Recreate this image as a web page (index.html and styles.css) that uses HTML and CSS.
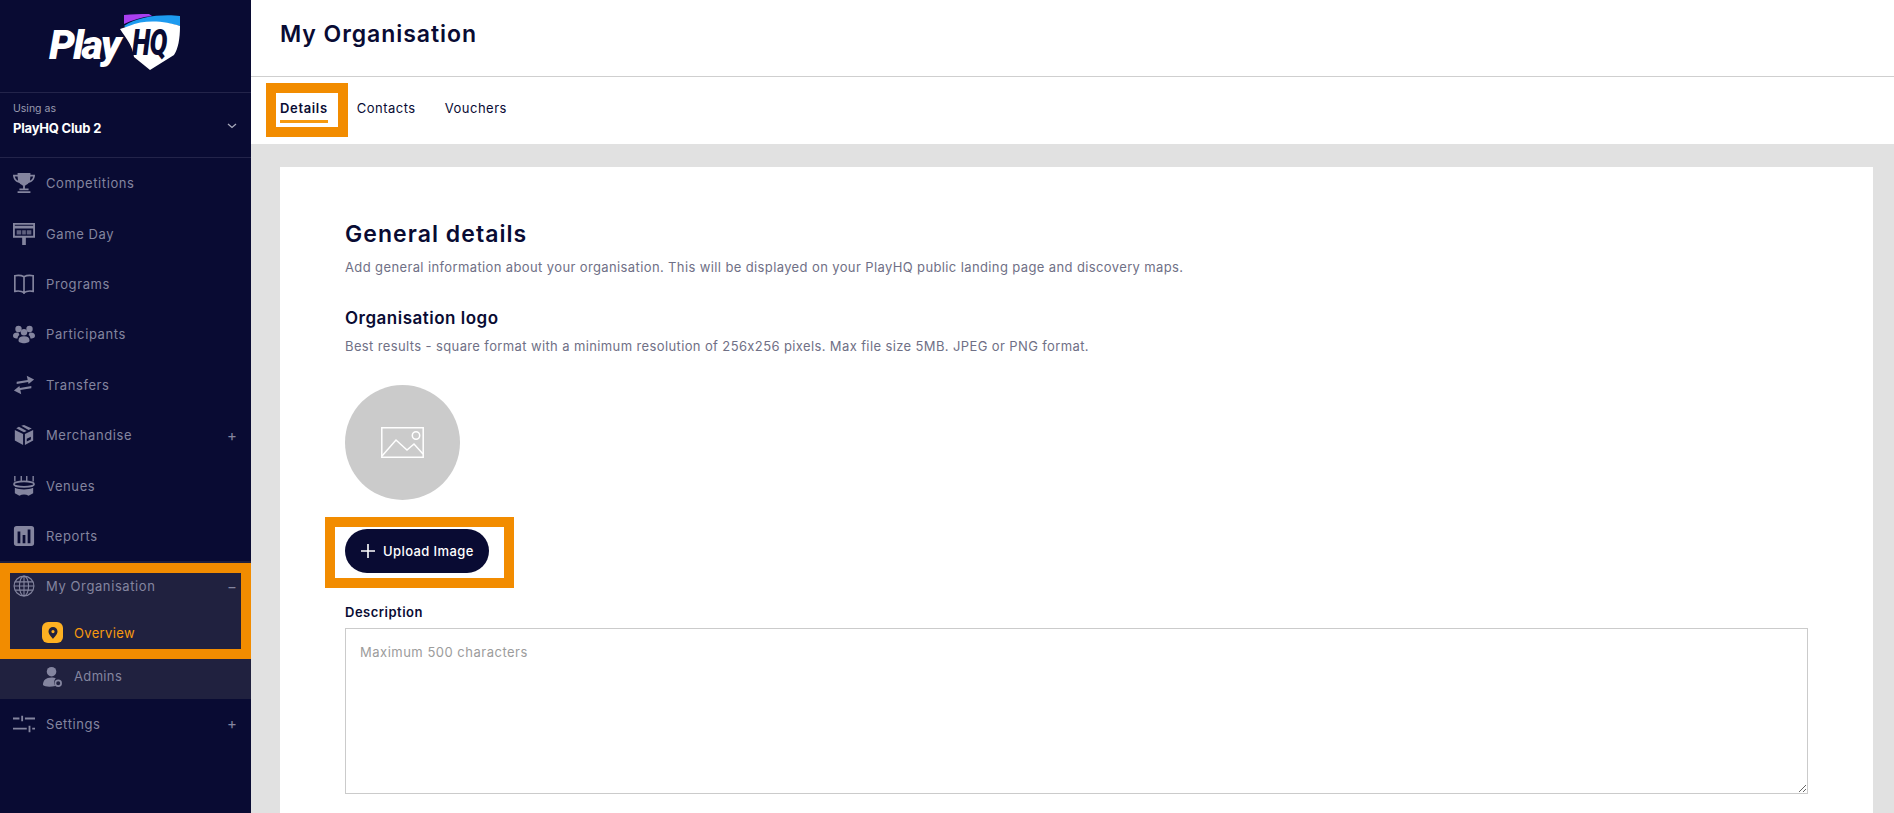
FILE: index.html
```html
<!DOCTYPE html>
<html lang="en">
<head>
<meta charset="utf-8">
<title>My Organisation</title>
<link rel="stylesheet" href="styles.css">
</head>
<body>
<div class="app">
  <aside class="sidebar">
    <div class="brand">
      <div class="logo">
        <span class="logo-play">Play</span>
        <div class="logo-shield">
          <svg class="shield-svg" viewBox="0 0 60 58">
            <path d="M4 2C12 1 20 1 29 1L32 3C22 4 12 7 4 11Z" fill="#a93ff0"/>
            <path d="M4 13C18 3 44 1 60 3V13C44 8 24 9 9 17Z" fill="#1d9bf0"/>
            <path d="M0 16L9 13C24 6 46 8 60 13C60 26 58 36 54 42L30 57L14 44C12 32 8 28 0 16Z" fill="#fff"/>
          </svg>
          <span class="logo-hq">HQ</span>
        </div>
      </div>
    </div>
    <div class="org-switch">
      <div>
        <div class="using">Using as</div>
        <div class="club">PlayHQ Club 2</div>
      </div>
      <svg class="chev" viewBox="0 0 10 6"><path d="M1 1L5 4.500L9 1" fill="none" stroke="#a9aabb" stroke-width="1.300"/></svg>
    </div>
    <nav class="nav">
      <a class="item"><svg class="ico" viewBox="0 0 24 24"><path d="M5 1H19V3H24C24 8 21 11 17 12C16 13.500 14 14 13 15V18H17V20H7V18H11V15C10 14 8 13.500 7 12C3 11 0 8 0 3H5ZM2 5C2.500 7.500 4 9 5.500 9.500L5 5ZM22 5H19L18.500 9.500C20 9 21.500 7.500 22 5ZM5 21H19V23H5Z" fill-rule="evenodd"/></svg><span>Competitions</span></a>
      <a class="item"><svg class="ico" viewBox="0 0 24 24"><path d="M0 0H24V16H14V24H10V16H0ZM2 2V3H22V2ZM2 6V14H22V6Z" fill-rule="evenodd"/><path d="M4 8H9V12.500H4ZM10 8H14V12.500H10ZM15 8H20V12.500H15Z" opacity=".7"/></svg><span>Game Day</span></a>
      <a class="item"><svg class="ico" viewBox="0 0 24 24"><path d="M12 4C10 3 5 2.500 2 3V20C5 19.500 10 20 12 21.500C14 20 19 19.500 22 20V3C19 2.500 14 3 12 4ZM12 4V23" fill="none" stroke="currentColor" stroke-width="1.800"/></svg><span>Programs</span></a>
      <a class="item"><svg class="ico" viewBox="0 0 24 24"><circle cx="6" cy="6.500" r="3.500"/><circle cx="18" cy="6.500" r="3.500"/><circle cx="12" cy="10" r="3.500"/><path d="M0 14C0 11 3 10 6 10.500L7 13C5.500 14 5 15.500 5 17C3 17 0 16.500 0 14ZM24 14C24 11 21 10 18 10.500L17 13C18.500 14 19 15.500 19 17C21 17 24 16.500 24 14ZM6 19C6 16 8 14.500 12 14.500C16 14.500 18 16 18 19C18 21 15 22 12 22C9 22 6 21 6 19Z"/></svg><span>Participants</span></a>
      <a class="item"><svg class="ico" viewBox="0 0 24 24"><path d="M4 11V8.500L16 6.500L15 2L23 6L17 11L16.500 8.800ZM20 13V15.500L8 17.500L9 22L1 18L7 13L7.500 15.200Z"/></svg><span>Transfers</span></a>
      <a class="item has-sign"><svg class="ico" viewBox="0 0 24 24"><path d="M12 1L9 2L17 6.500L20.500 5ZM6.500 3L3.500 4.500L12 9L15 7.500ZM2 6.500V18L11 23V11ZM22 6.500L13 11V23L22 18ZM15 16L19.500 14V17L15 19Z" fill-rule="evenodd"/></svg><span>Merchandise</span><i class="sign">+</i></a>
      <a class="item"><svg class="ico" viewBox="0 0 24 24"><path d="M2 1V7M9 1V7M15 1V7M22 1V7" stroke="currentColor" stroke-width="1.500"/><ellipse cx="12" cy="10" rx="11" ry="3" fill="none" stroke="currentColor" stroke-width="1.800"/><path d="M2 14C7 16.500 17 16.500 22 14V20L17 22.500C14 21 10 21 7 22.500L2 20Z"/></svg><span>Venues</span></a>
      <a class="item"><svg class="ico" viewBox="0 0 24 24"><path d="M4 1H20A3 3 0 0 1 23 4V20A3 3 0 0 1 20 23H4A3 3 0 0 1 1 20V4A3 3 0 0 1 4 1ZM5 7V20H8V7ZM10.500 11V20H13.500V11ZM16 5V20H19V5Z" fill-rule="evenodd"/></svg><span>Reports</span></a>
      <div class="group">
        <a class="item has-sign"><svg class="ico" viewBox="0 0 24 24"><g fill="none" stroke="currentColor" stroke-width="1.200"><circle cx="12" cy="12" r="10.800"/><ellipse cx="12" cy="12" rx="5" ry="10.800"/><path d="M12 1V23M2 7.500H22M1 12H23M2 16.500H22"/></g></svg><span>My Organisation</span><i class="sign">−</i></a>
        <a class="sub active"><span class="marker"><svg viewBox="0 0 12 14"><path d="M6 1A4.500 4.500 0 0 1 10.500 5.500C10.500 8.500 7 11.500 6 13C5 11.500 1.500 8.500 1.500 5.500A4.500 4.500 0 0 1 6 1ZM6 4A1.600 1.600 0 1 0 6 7.200A1.600 1.600 0 1 0 6 4Z" fill="#20213f" fill-rule="evenodd"/></svg></span><span>Overview</span></a>
        <a class="sub"><svg class="sub-ico" viewBox="0 0 22 22"><circle cx="10" cy="6" r="5"/><path d="M1 20C1 15 4 12 10 12C12 12 13.500 12.500 14.500 13C12.500 14.500 12 18 14 21C9 22 3 22 1 20Z"/><circle cx="17" cy="18" r="3" fill="none" stroke="currentColor" stroke-width="1.800"/></svg><span>Admins</span></a>
        <div class="hl-nav"></div>
      </div>
      <a class="item has-sign"><svg class="ico" viewBox="0 0 24 24"><path d="M0 5H7V7H0ZM9 3H11V9H9ZM13 5H24V7H13ZM0 16H15V18H0ZM17 14H19V21H17ZM21 16H24V18H21Z"/></svg><span>Settings</span><i class="sign">+</i></a>
    </nav>
  </aside>

  <main class="main">
    <header class="topbar"><h1>My Organisation</h1></header>
    <div class="tabs">
      <a class="tab current">Details<span class="hl-tab"></span></a>
      <a class="tab">Contacts</a>
      <a class="tab">Vouchers</a>
    </div>
    <div class="content">
      <section class="card">
        <h2>General details</h2>
        <p class="hint">Add general information about your organisation. This will be displayed on your PlayHQ public landing page and discovery maps.</p>
        <h3>Organisation logo</h3>
        <p class="hint hint-logo">Best results - square format with a minimum resolution of 256x256 pixels. Max file size 5MB. JPEG or PNG format.</p>
        <div class="avatar">
          <svg viewBox="0 0 43 31"><g fill="none" stroke="#fff" stroke-width="1.500"><path d="M.8.8H42.200V30.200H.8Z"/><circle cx="35" cy="8.500" r="3.700"/><path d="M1 29L15 13L26 23L33 17L42 27"/></g></svg>
        </div>
        <button class="upload" type="button"><svg viewBox="0 0 14 14"><path d="M7 0V14M0 7H14" stroke="#fff" stroke-width="1.600"/></svg>Upload Image<span class="hl-upload"></span></button>
        <label class="field-label" for="desc">Description</label>
        <textarea id="desc" class="desc" placeholder="Maximum 500 characters"></textarea>
      </section>
    </div>
  </main>
</div>
</body>
</html>
```
FILE: styles.css
```css
* { box-sizing: border-box; }
html, body { margin: 0; height: 100%; overflow: hidden; }
body { font-family: "Inter", "Noto Sans", sans-serif; color: #090b33; background: #e1e1e1; }
a { color: inherit; text-decoration: none; }

.app { display: flex; height: 813px; }

/* sidebar */
.sidebar { width: 251px; flex: none; background: #090b33; color: #84859f; }
.brand { height: 93px; border-bottom: 1px solid #23244a; display: flex; padding: 13px 0 0 49px; }
.logo { display: flex; align-items: flex-start; width: 131px; height: 58px; }
.logo-play { font: italic 900 41px/1 "Roboto", "Liberation Sans", sans-serif; color: #fff; letter-spacing: -2px; margin-top: 12px; width: 71px; flex: none; }
.logo-shield { position: relative; width: 60px; height: 58px; flex: none; }
.shield-svg { display: block; width: 60px; height: 58px; }
.logo-hq { position: absolute; left: 12px; top: 11px; font: italic 900 37px/1 "Roboto", "Liberation Sans", sans-serif; color: #090b33; letter-spacing: -1px; transform: scaleX(.72); transform-origin: left top; }
.org-switch { height: 65px; border-bottom: 1px solid #23244a; padding: 8px 14px 0 13px; display: flex; justify-content: space-between; align-items: flex-start; }
.using { font-size: 10.500px; line-height: 16px; color: #9a9bb0; }
.club { font-size: 13px; font-weight: 700; line-height: 16px; color: #fff; margin-top: 3px; letter-spacing: -.2px; }
.chev { width: 10px; height: 6px; margin: 22px 0 0; }
.nav { display: flex; flex-direction: column; }
.item { height: 50.400px; display: flex; align-items: center; padding: 0 14px 0 13px; font-size: 13px; letter-spacing: .6px; }
.ico { width: 22px; height: 22px; flex: none; margin-right: 11px; fill: currentColor; }
.sign { font-style: normal; margin-left: auto; font-size: 15px; width: 10px; text-align: center; letter-spacing: 0; }
.group { position: relative; background: #20213f; height: 137.500px; }
.sub { height: 43.300px; display: flex; align-items: center; padding-left: 42px; font-size: 13px; letter-spacing: .35px; }
.sub.active { color: #f79a0e; }
.group > .item { height: 50px; }
.marker { width: 21px; height: 21px; border-radius: 6px; background: #fdb022; margin-right: 11px; display: flex; align-items: center; justify-content: center; flex: none; }
.marker svg { width: 12px; height: 14px; }
.sub-ico { width: 21px; height: 21px; fill: currentColor; margin-right: 11px; flex: none; }
.hl-nav { position: absolute; left: 0; top: 2px; width: 251px; height: 96px; border: 10px solid #f28c00; }

/* main */
.main { flex: 1; min-width: 0; display: flex; flex-direction: column; }
.topbar { height: 77px; background: #fff; border-bottom: 1px solid #cfcfcf; padding: 0 29px; display: flex; align-items: center; }
h1 { font-size: 23px; font-weight: 600; margin: 0 0 9px; letter-spacing: .95px; }
.tabs { height: 67px; background: #fff; display: flex; gap: 29px; padding: 0 29px; align-items: flex-start; }
.tab { position: relative; font-size: 13px; line-height: 16px; padding-top: 23px; height: 46px; letter-spacing: .5px; }
.tab.current { font-weight: 600; letter-spacing: .65px; }
.tab.current::after { content: ""; position: absolute; left: 0; right: 0; top: 43px; height: 3px; background: #f79a0e; }
.hl-tab { position: absolute; left: -14px; top: 6px; width: 82px; height: 54px; border: 10px solid #f28c00; }
.content { flex: 1; padding: 23px 21px 0 29px; min-height: 0; }
.card { background: #fff; height: 700px; padding: 53px 65px 0; }
h2 { font-size: 23px; font-weight: 600; line-height: 28px; margin: 0; letter-spacing: 1.05px; }
h3 { font-size: 17px; font-weight: 600; line-height: 22px; margin: 31px 0 0; letter-spacing: .5px; }
.hint { font-size: 13px; line-height: 18px; color: #6f7086; margin: 10px 0 0; letter-spacing: .38px; }
.hint-logo { margin-top: 8px; }
.avatar { width: 115px; height: 115px; border-radius: 50%; background: #cbcbcb; margin-top: 30px; display: flex; align-items: center; justify-content: center; }
.avatar svg { width: 43px; height: 31px; }
.upload { position: relative; display: flex; align-items: center; width: 144px; height: 44px; margin-top: 29px; border: 0; border-radius: 22px; background: #090b33; color: #fff; font: 500 13px "Inter", sans-serif; letter-spacing: .4px; padding: 0 0 0 16px; }
.upload svg { width: 14px; height: 14px; margin-right: 8px; }
.hl-upload { position: absolute; left: -20px; top: -12px; width: 189px; height: 71px; border: 10px solid #f28c00; }
.field-label { display: block; font-size: 13px; font-weight: 600; line-height: 16px; margin-top: 31px; letter-spacing: .5px; }
.desc { display: block; width: 1463px; height: 166px; margin-top: 8px; border: 1px solid #cbcbcb; padding: 15px 14px; font: 13px "Inter", sans-serif; letter-spacing: .5px; background: #fff; }
.desc::placeholder { color: #9c9c9c; }
```
